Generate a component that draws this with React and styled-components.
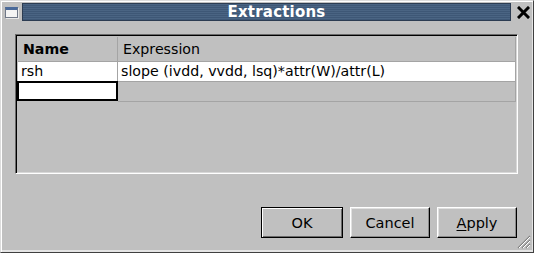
import styled, {createGlobalStyle} from "styled-components";

const GlobalStyle = createGlobalStyle`
  html, body {
    margin: 0;
    padding: 0;
    background: #c0c0c0;
  }
  body {
    font-family: "DejaVu Sans", "Liberation Sans", sans-serif;
  }
`;

const Window = styled.div`
  position: relative;
  width: 534px;
  height: 253px;
  box-sizing: border-box;
  background: #c0c0c0;
  border: 1px solid;
  border-color: #dcdcdc #404040 #404040 #dcdcdc;
  box-shadow: inset 1px 1px 0 #ffffff, inset -1px -2px 0 #e4e4e4;
  display: flex;
  flex-direction: column;
`;

const TitleRow = styled.div`
  display: flex;
  align-items: center;
  height: 20px;
  padding: 1px 0 0 4px;
  gap: 2px;
`;

const WinIcon = styled.div`
  width: 13px;
  height: 11px;
  margin-right: 2px;
  box-sizing: border-box;
  border: 1px solid #707888;
  border-top: 3px solid #4a6a9a;
  background: #f4f4f4;
  box-shadow: 1px 1px 0 #e8e8e8;
`;

const TitleBar = styled.div`
  flex: 1;
  height: 18px;
  box-sizing: border-box;
  border: 1px solid #2c3c52;
  background: repeating-linear-gradient(to bottom, #4a6483 0 1px, #3e5776 1px 2px);
  color: #ffffff;
  font-weight: bold;
  font-size: 15px;
  line-height: 16px;
  text-align: center;
  padding-left: 20px;
  letter-spacing: 0.2px;
`;

const CloseBox = styled.div`
  width: 20px;
  height: 18px;
  display: flex;
  align-items: center;
  justify-content: center;
`;

const Body = styled.div`
  flex: 1;
  display: flex;
  flex-direction: column;
  padding: 12px 15px 0 14px;
`;

const TableFrame = styled.div`
  height: 140px;
  box-sizing: border-box;
  border: 1px solid;
  border-color: #6a6a6a #ffffff #ffffff #6a6a6a;
  box-shadow: inset 1px 1px 0 #000000, inset -1px -1px 0 #d8d8d8;
  padding: 2px 1px 1px 2px;
  background: #c0c0c0;
`;

const Grid = styled.div`
  display: grid;
  grid-template-columns: 100px 1fr;
  font-size: 14.2px;
  color: #000;
`;

const HeadCell = styled.div`
  height: 24px;
  line-height: 24px;
  padding-left: 5px;
  border-right: 1px solid #a4a4a4;
  border-bottom: 1px solid #a4a4a4;
  font-weight: ${p => (p.$bold ? "bold" : "normal")};
  white-space: nowrap;
`;

const Cell = styled.div`
  height: 19px;
  line-height: 18px;
  padding-left: 3px;
  box-sizing: content-box;
  border-right: 1px solid #a4a4a4;
  border-bottom: 1px solid #a4a4a4;
  background: ${p => (p.$blank ? "#c0c0c0" : "#ffffff")};
  white-space: nowrap;
`;

const EditCell = styled.div`
  height: 20px;
  margin-left: -1px;
  margin-top: -1px;
  box-sizing: border-box;
  border: 2px solid #000;
  background: #ffffff;
`;

const ButtonRow = styled.div`
  display: flex;
  justify-content: flex-end;
  gap: 7px;
  margin-top: 33px;
  margin-right: 1px;
`;

const Button = styled.button`
  width: ${p => p.$w || "80px"};
  height: 31px;
  box-sizing: border-box;
  padding: 0;
  font-family: "DejaVu Sans", "Liberation Sans", sans-serif;
  font-size: 14.5px;
  color: #000;
  background: #c0c0c0;
  border: 1px solid;
  border-color: ${p => (p.$default ? "#000 #000 #000 #000" : "#ffffff #000 #000 #ffffff")};
  box-shadow: ${p =>
    p.$default
      ? "inset 1px 1px 0 #ffffff, inset -1px -1px 0 #6a6a6a"
      : "inset -1px -1px 0 #8a8a8a, inset 1px 1px 0 #e0e0e0"};
  u {
    text-decoration: underline;
    text-underline-offset: 2px;
  }
`;

const Grip = styled.svg`
  position: absolute;
  right: 2px;
  bottom: 3px;
`;

export default function App() {
  return (
    <>
      <GlobalStyle/>
      <Window>
        <TitleRow>
          <WinIcon/>
          <TitleBar>Extractions</TitleBar>
          <CloseBox>
            <svg width="13" height="13" viewBox="0 0 13 13">
              <path d="M2 2 L11 11 M11 2 L2 11" stroke="#000" strokeWidth="3" strokeLinecap="square"/>
            </svg>
          </CloseBox>
        </TitleRow>
        <Body>
          <TableFrame>
            <Grid>
              <HeadCell $bold>Name</HeadCell>
              <HeadCell>Expression</HeadCell>
              <Cell>rsh</Cell>
              <Cell>slope (ivdd, vvdd, lsq)*attr(W)/attr(L)</Cell>
              <EditCell/>
              <Cell $blank/>
            </Grid>
          </TableFrame>
          <ButtonRow>
            <Button $default $w="82px">OK</Button>
            <Button>Cancel</Button>
            <Button><u>A</u>pply</Button>
          </ButtonRow>
        </Body>
        <Grip width="14" height="14" viewBox="0 0 14 14">
          <path d="M13 1 L1 13 M13 5 L5 13 M13 9 L9 13" stroke="#808080" strokeWidth="1.2"/>
          <path d="M13 2 L2 13 M13 6 L6 13 M13 10 L10 13" stroke="#ffffff" strokeWidth="1"/>
        </Grip>
      </Window>
    </>
  );
}
